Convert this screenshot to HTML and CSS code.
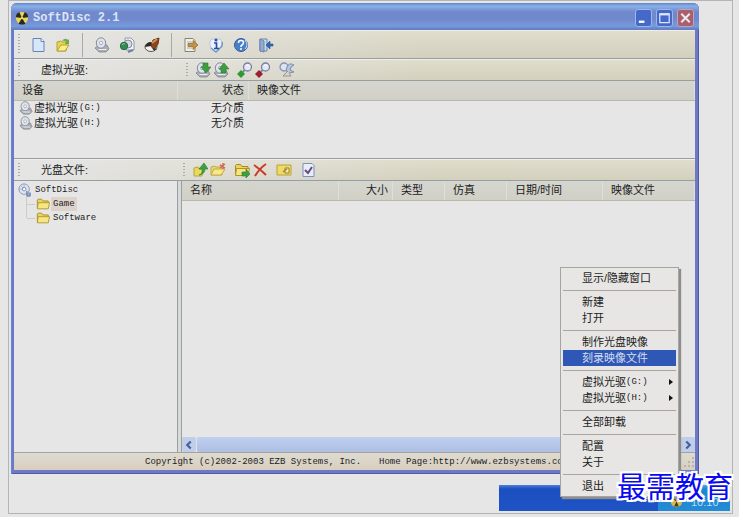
FILE: index.html
```html
<!DOCTYPE html>
<html lang="zh-CN">
<head>
<meta charset="UTF-8">
<title>SoftDisc 2.1</title>
<link rel="stylesheet" href="styles.css">
</head>
<body>
<!-- shared icon shapes -->
<svg class="defs" aria-hidden="true">
<symbol id="disc" viewBox="0 0 16 16">
<path d="M1 11l4-3h8l2 4-3 3H5z" fill="#a9adb4" stroke="#777c86" stroke-width=".7"/>
<ellipse cx="7" cy="6" rx="4.7" ry="5.2" fill="#dfe3ec" stroke="#858b9b"/>
<ellipse cx="7" cy="6" rx="1.5" ry="1.7" fill="#fff" stroke="#969caa" stroke-width=".8"/>
<path d="M3 12h9l1 1H6z" fill="#eceef0"/>
</symbol>
<symbol id="folder" viewBox="0 0 16 16">
<path d="M1.5 12.5v-9l1-1h4l1.5 2h6v3" fill="#ecd456" stroke="#a48b25"/>
<path d="M1.5 13.5l1-7h13l-1.5 7z" fill="#f6e681" stroke="#ae942b"/>
</symbol>
<symbol id="magnet" viewBox="0 0 16 16">
<circle cx="10.500" cy="5" r="4" fill="#e3e8f4" stroke="#7681a5" stroke-width="1.3"/>
<path d="M9 3.500q2-1.500 3.500 1" fill="none" stroke="#fff"/>
<path d="M7.500 8l-2 2.500" stroke="#7681a5" stroke-width="2"/>
</symbol>
</svg>

<main class="frame">
<section class="window">
<header class="titlebar">
<svg class="icon" viewBox="0 0 16 16"><circle cx="8" cy="8" r="7" fill="#e9d657"/><path d="M8 8L1 7q0-4 4-5.500zM8 8l3-6.500q4 1.500 4 5.500zM8 8l4 6.500q-4 2-8 0z" fill="#272923"/><circle cx="8" cy="8" r="1.500" fill="#e9d657"/></svg>
<h1>SoftDisc 2.1</h1>
<button class="win-btn" aria-label="最小化"><svg viewBox="0 0 16 16"><path d="M3 12h6" stroke="#fff" stroke-width="2.500"/></svg></button>
<button class="win-btn" aria-label="最大化"><svg viewBox="0 0 16 16"><path d="M3 4h10v9H3z" fill="none" stroke="#dce6fa" stroke-width="1.300"/><path d="M2.500 4h11" stroke="#dce6fa" stroke-width="2.500"/></svg></button>
<button class="win-btn close" aria-label="关闭"><svg viewBox="0 0 16 16"><path d="M3.500 3.500l9 9M12.500 3.500l-9 9" stroke="#f2e8ea" stroke-width="2.200"/></svg></button>
</header>

<div class="client">
<nav class="toolbar main-bar">
<i class="grip"></i>
<button class="tool" aria-label="新建"><svg class="icon" viewBox="0 0 16 16"><path d="M3 1.500h8l3 3v10H3z" fill="#d8e6fa" stroke="#6882b5"/><path d="M11 1.500v3h3" fill="#fff" stroke="#6882b5"/></svg></button>
<button class="tool" aria-label="打开"><svg class="icon" viewBox="0 0 16 16"><path d="M2 14V5l4-1 1 1h5l-1 9z" fill="#e6d552" stroke="#b4a136"/><path d="M2 14l4-6h8l-4 6z" fill="#f8ef86" stroke="#b4a136"/><path d="M7 4q3-4 6-1l1-1v5h-4l1-2q-1-2-4-1z" fill="#6fab4b"/></svg></button>
<i class="divider"></i>
<button class="tool" aria-label="虚拟光驱"><svg class="icon"><use href="#disc"/></svg></button>
<button class="tool" aria-label="制作光盘映像"><svg class="icon" viewBox="0 0 16 16"><path d="M6 1h6l3 3v9H7z" fill="#f2f4f8" stroke="#8d96ac"/><circle cx="9" cy="7" r="4" fill="#d6dae2" stroke="#858b99"/><circle cx="5" cy="9" r="3.700" fill="#338b52" stroke="#286b44"/><path d="M3 8q1-2 3-1" stroke="#90ce93" fill="none"/><path d="M9 15l5-2" stroke="#72819f" stroke-width="2"/></svg></button>
<button class="tool" aria-label="刻录映像文件"><svg class="icon" viewBox="0 0 16 16"><ellipse cx="7" cy="10" rx="6" ry="4.500" fill="#f3f0e9" stroke="#555"/><path d="M1 10q1-5 7-5l-1 4z" fill="#292927"/><path d="M7 9l2-6 6-2-1 6-4 6z" fill="#8d4524" stroke="#663719"/><path d="M8 6l5-4" stroke="#db9150" stroke-width="2"/><path d="M9 11l4 1-3 2z" fill="#333"/></svg></button>
<i class="divider"></i>
<button class="tool" aria-label="配置"><svg class="icon" viewBox="0 0 16 16"><path d="M2 1.500h8l2 2v11H2z" fill="#f1eee6" stroke="#8a826f"/><path d="M4 5h5M4 11h5" stroke="#9eb0ca"/><path d="M5 6.500h5v-3l5 4.500-5 4.500v-3H5z" fill="#c7943a" stroke="#89652a" stroke-width=".7"/></svg></button>
<button class="tool" aria-label="关于"><svg class="icon" viewBox="0 0 16 16"><path d="M8 15l-5-4q-3-6 1-9h8q4 4 1 9z" fill="#edf1fb" stroke="#b9c4da"/><path d="M14 5q1 4-2 6l-4 4-5-4" fill="none" stroke="#7595c5" stroke-width="1.500"/><circle cx="8" cy="3" r="1.500" fill="#244fa5"/><path d="M6 6h2.500v5M6 11.500h5" stroke="#244fa5" stroke-width="1.700" fill="none"/></svg></button>
<button class="tool" aria-label="帮助"><svg class="icon" viewBox="0 0 16 16"><circle cx="8" cy="8" r="6.500" fill="#477fc8" stroke="#355b9b"/><path d="M12 3q4 5 0 9" stroke="#d6e7f8" fill="none"/><path d="M5.500 6q0-3 3-2.500t1.500 3.500L8 9v1" stroke="#fff" stroke-width="1.600" fill="none"/><circle cx="8" cy="12" r="1" fill="#fff"/></svg></button>
<button class="tool" aria-label="退出"><svg class="icon" viewBox="0 0 16 16"><path d="M2 2h7v12H2z" fill="#c9daee" stroke="#6b83a7"/><path d="M2 2l4 2v11l-4-1z" fill="#91aed2" stroke="#6b83a7"/><path d="M8 8l4-4v3h3v2h-3v3z" fill="#3268b2" stroke="#285391" stroke-width=".6"/></svg></button>
</nav>

<div class="toolbar">
<div class="band drive-band"><i class="grip"></i><span class="caption">虚拟光驱:</span></div>
<i class="grip"></i>
<div class="tools">
<button class="tool small" aria-label="加载"><svg class="icon" viewBox="0 0 16 16"><use href="#disc"/><path d="M8 1h5v4h3l-5 6-5-6h2z" fill="#3e9d3f" stroke="#2b7931" stroke-width=".6"/></svg></button>
<button class="tool small" aria-label="卸载"><svg class="icon" viewBox="0 0 16 16"><use href="#disc"/><path d="M8 11h5V7h3l-5-6-5 6h2z" fill="#3e9d3f" stroke="#2b7931" stroke-width=".6"/></svg></button>
</div>
<div class="tools">
<button class="tool small" aria-label="添加光驱"><svg class="icon" viewBox="0 0 16 16"><use href="#magnet"/><path d="M4 8l4 4-4 4-4-4z" fill="#2d9b34"/></svg></button>
<button class="tool small" aria-label="删除光驱"><svg class="icon" viewBox="0 0 16 16"><use href="#magnet"/><path d="M4 8l4 4-4 4-4-4z" fill="#9c202e"/></svg></button>
</div>
<div class="tools">
<button class="tool small" aria-label="光驱设置"><svg class="icon" viewBox="0 0 16 16"><circle cx="5" cy="5" r="4" fill="#dce2ef" stroke="#8892b1" stroke-width="1.300"/><path d="M15 3q-5-3-7 2t2 6l5-1-4-2 1-3z" fill="#b4c5e0" stroke="#7e8dac"/><path d="M9 9l-5 5h8l-2-3" fill="#ded8cc" stroke="#9b9386"/></svg></button>
</div>
</div>

<div class="devices">
<table>
<colgroup><col class="c-device"><col class="c-state"><col></colgroup>
<thead><tr><th>设备</th><th class="right">状态</th><th>映像文件</th></tr></thead>
<tbody>
<tr><td><svg class="icon"><use href="#disc"/></svg>虚拟光驱<span class="latin">(G:)</span></td><td class="right">无介质</td><td></td></tr>
<tr><td><svg class="icon"><use href="#disc"/></svg>虚拟光驱<span class="latin">(H:)</span></td><td class="right">无介质</td><td></td></tr>
</tbody>
</table>
</div>

<div class="toolbar">
<div class="band file-band"><i class="grip"></i><span class="caption">光盘文件:</span></div>
<i class="grip"></i>
<div class="tools">
<button class="tool small" aria-label="向上"><svg class="icon" viewBox="0 0 16 16"><path d="M2 14V6l4-1 1 2h4l-1 7z" fill="#ead956" stroke="#b8a544"/><path d="M7 13q4-1 3-6H7l5-6 4 6h-3q0 5-6 6z" fill="#3da142" stroke="#287833" stroke-width=".6"/></svg></button>
<button class="tool small" aria-label="新建文件夹"><svg class="icon" viewBox="0 0 16 16"><path d="M1 13V5l4-1 1 1h6v8z" fill="#ead660" stroke="#c2ab50"/><path d="M1 13l3-6h11l-4 6z" fill="#f7e986" stroke="#c2ab50"/><path d="M10 3l5 3M13 1v6M10 6l5-4" stroke="#d16a5b" stroke-width="1.500"/></svg></button>
</div>
<div class="tools">
<button class="tool small" aria-label="添加映像"><svg class="icon" viewBox="0 0 16 16"><use href="#folder"/><path d="M8 10h4V7l4 5-4 4v-2H8z" fill="#3da142" stroke="#287833" stroke-width=".6"/></svg></button>
<button class="tool small" aria-label="删除"><svg class="icon" viewBox="0 0 16 16"><path d="M2 3q6 4 12 10M14 2Q8 6 3 14" stroke="#ca3b27" stroke-width="2" fill="none"/></svg></button>
</div>
<div class="tools">
<button class="tool small" aria-label="重命名"><svg class="icon" viewBox="0 0 16 16"><path d="M1 3h14v10H1z" fill="#eddb65" stroke="#b9a03b"/><path d="M9 6h4v5H9z" fill="#f8efb2" stroke="#94802f"/><path d="M7 10l4-3" stroke="#a78c2c" stroke-width="1.500"/></svg></button>
</div>
<div class="tools">
<button class="tool small" aria-label="属性"><svg class="icon" viewBox="0 0 16 16"><path d="M3 1.500h9l2 2v11H3z" fill="#e8edfc" stroke="#7a8fc4"/><path d="M5 8l3 3 4-6" stroke="#634d75" stroke-width="2" fill="none"/></svg></button>
</div>
</div>

<div class="panes">
<ul class="tree">
<li><svg class="icon" viewBox="0 0 16 16"><circle cx="7" cy="7" r="6" fill="#dbe2f2" stroke="#8993b7"/><path d="M7 1v4M1 7h4M3 3l3 3" stroke="#a5b3d5"/><circle cx="7" cy="7" r="2" fill="#fff" stroke="#7b85aa"/><path d="M10 9v6h4v-4" fill="#93a6cf" stroke="#6577a4"/></svg><span>SoftDisc</span>
<ul>
<li><svg class="icon"><use href="#folder"/></svg><span class="picked">Game</span></li>
<li><svg class="icon"><use href="#folder"/></svg><span>Software</span></li>
</ul>
</li>
</ul>
<div class="files">
<table>
<colgroup><col class="c-name"><col class="c-size"><col class="c-type"><col class="c-emu"><col class="c-date"><col></colgroup>
<thead><tr><th>名称</th><th class="right">大小</th><th>类型</th><th>仿真</th><th>日期/时间</th><th>映像文件</th></tr></thead>
</table>
<div class="scrollbar">
<button aria-label="向左滚动"><svg viewBox="0 0 16 16"><path d="M10 4L6 8l4 4" fill="none" stroke="#46619c" stroke-width="2.500"/></svg></button>
<div class="thumb"></div>
<button aria-label="向右滚动"><svg viewBox="0 0 16 16"><path d="M6 4l4 4-4 4" fill="none" stroke="#46619c" stroke-width="2.500"/></svg></button>
</div>
</div>
</div>

<footer class="status">
<span>Copyright (c)2002-2003 EZB Systems, Inc.</span>
<span class="home">Home Page:http://www.ezbsystems.com</span>
<svg class="sizer" viewBox="0 0 12 12"><path d="M9 1h2v2H9zM5 5h2v2H5zM9 5h2v2H9zM1 9h2v2H1zM5 9h2v2H5zM9 9h2v2H9z" fill="#b9b4a6"/></svg>
</footer>
</div>
</section>

<div class="taskbar">
<div class="tray">
<svg class="icon" viewBox="0 0 16 16"><circle cx="8" cy="8" r="7" fill="#d8b951"/><path d="M8 8L2 4l3-3zM8 8l3-7 4 4zM8 8l3 6H5z" fill="#493d22"/></svg>
<time>10:10</time>
</div>
</div>

<!-- tray menu -->
<div class="menu" role="menu">
<button role="menuitem">显示/隐藏窗口</button>
<hr>
<button role="menuitem">新建</button>
<button role="menuitem">打开</button>
<hr>
<button role="menuitem">制作光盘映像</button>
<button role="menuitem" class="active">刻录映像文件</button>
<hr>
<button role="menuitem" class="sub">虚拟光驱<span class="latin">(G:)</span></button>
<button role="menuitem" class="sub">虚拟光驱<span class="latin">(H:)</span></button>
<hr>
<button role="menuitem">全部卸载</button>
<hr>
<button role="menuitem">配置</button>
<button role="menuitem">关于</button>
<hr>
<button role="menuitem">退出</button>
</div>

<div class="brand">最需教育</div>
</main>
</body>
</html>
```
FILE: styles.css
```css
* { box-sizing:border-box; }
body { margin:0; background:#e6e6e6; color:#1c1c1c; font:11px/15px "Liberation Sans", "Noto Sans CJK SC", sans-serif; }
button { font:inherit; color:inherit; margin:0; padding:0; border:0; background:none; }
ul { list-style:none; margin:0; padding:0; }
.defs { position:absolute; width:0; height:0; }
.icon { display:block; width:16px; height:16px; flex:none; }
.latin { font-family:"Liberation Mono", monospace; font-size:9px; }

.frame { position:relative; display:flex; flex-direction:column; height:calc(100vh - 3px); min-height:480px; margin:0 6px 0 8px; padding:2px 2px 2px 2px; border:1px solid #b4b4b4; }

/* window */
.window { flex:1; min-height:0; display:flex; flex-direction:column; margin:0 31px 11px 0; padding:0 4px 4px 3px; border-radius:6px 6px 0 0; background:#6a7ac6; box-shadow:inset 1px 0 #6384d8, inset -1px -1px #5759a0; }
.titlebar { display:flex; align-items:center; gap:4px; height:27px; margin:0 -4px 0 -3px; padding:2px 5px 0 4px; border-radius:6px 6px 0 0; background:linear-gradient(#5f83c8, #88b0e6 3px, #7088cc 9px, #7088cc 16px, #769bdd 23px, #6278c0); }
.titlebar .icon { width:14px; height:14px; }
.titlebar h1 { flex:1; margin:0; font:bold 12px/16px "Liberation Mono", monospace; color:#dbe5f7; }
.win-btn { width:17px; height:18px; border:1px solid #9db7ec; border-radius:3px; background:#4569c9; }
.win-btn svg { display:block; width:15px; height:16px; }
.close { background:#a8606f; border-color:#c2a1c0; }
.client { flex:1; min-height:0; display:flex; flex-direction:column; background:#e6e6e6; }

/* toolbars */
.toolbar { display:flex; align-items:center; flex:none; height:22px; padding-left:4px; background:linear-gradient(90deg, #e5e5e5, rgba(229,229,229,0) 60%), linear-gradient(#e0ddcc, #d3d0be); border-bottom:1px solid #989e9e; border-top:1px solid #eeeeea; }
.main-bar { height:29px; }
.grip { flex:none; width:2px; height:15px; background:repeating-linear-gradient(#aaa9a2 0 1px, transparent 1px 3px); }
.main-bar .grip { height:21px; margin-right:5px; }
.divider { width:1px; height:24px; margin:0 6px 0 7px; background:#aaa9a1; }
.tool { display:flex; align-items:center; justify-content:center; width:25px; height:22px; }
.small { width:18px; height:20px; }
.tools { display:flex; margin-left:6px; }
.band { display:flex; align-items:center; flex:none; }
.drive-band { width:168px; }
.file-band { width:165px; }
.caption { margin-left:21px; }

/* lists */
table { width:100%; border-collapse:collapse; table-layout:fixed; }
th { height:19px; padding:0 8px; text-align:left; font-weight:normal; white-space:nowrap; background:linear-gradient(#d6d6d0, #d0d0c6); border-bottom:1px solid #b9b8aa; box-shadow:inset -1px 0 #dfdfda; }
td { height:15px; padding:0 5px; line-height:15px; white-space:nowrap; }
td:first-child { display:flex; align-items:center; gap:1px; }
td .icon { width:14px; height:14px; }
th.right, td.right { text-align:right; padding-right:5px; }
.devices { flex:none; height:78px; overflow:hidden; border-bottom:1px solid #989e9e; }
.c-device { width:164px; }
.c-state { width:71px; }
.c-name { width:157px; }
.c-size { width:54px; }
.c-type { width:52px; }
.c-emu { width:62px; }
.c-date { width:96px; }

.panes { flex:1; min-height:0; display:flex; gap:3px; background:#d9d9d5; border-bottom:1px solid #a2a2a0; }
.tree { flex:none; width:164px; padding:2px 0 0 4px; background:#e6e6e6; border-right:1px solid #9a9ea5; font:9px/14px "Liberation Mono", monospace; }
.tree li { position:relative; }
.tree .icon { display:inline-block; width:14px; height:14px; margin-right:3px; vertical-align:top; }
.tree ul { margin-left:8px; border-left:1px solid #cccbc5; height:21px; }
.tree ul li { display:flex; height:14px; padding-left:9px; }
.tree ul li::before { content:""; position:absolute; left:0; top:7px; width:8px; border-top:1px solid #cccbc5; }
.tree ul .icon { margin-right:1px; }
.tree ul span { padding:0 2px; }
.picked { background:#ddd3ca; }
.files { flex:1; min-width:0; display:flex; flex-direction:column; justify-content:space-between; background:#e6e6e6; border-left:1px solid #9a9ea5; }
.scrollbar { display:flex; gap:1px; height:15px; background:#dfe3e8; }
.scrollbar button { width:14px; background:#c0cee9; border-radius:2px; }
.scrollbar svg { display:block; width:14px; height:14px; }
.thumb { flex:1; border-radius:2px; background:linear-gradient(#c0d0f0, #adbee2); }
.status { display:flex; align-items:center; gap:18px; flex:none; height:17px; padding-left:131px; white-space:nowrap; background:linear-gradient(#dedbd0, #d8cec1); font:9px/16px "Liberation Mono", monospace; }
.home { flex:1; }
.sizer { width:12px; height:12px; }

/* desktop */
.taskbar { display:flex; justify-content:flex-end; align-self:flex-end; flex:none; width:231px; height:26px; background:linear-gradient(#4c82d8, #1c4fc0 4px, #1e53c6); }
.tray { display:flex; align-items:flex-end; gap:8px; width:72px; padding:0 0 3px 12px; background:linear-gradient(#4aa5e4, #1d86d2 4px, #248bd6); color:#b7dcf5; line-height:11px; }
.tray .icon { width:13px; height:13px; }
.menu { position:absolute; right:53px; bottom:16px; width:119px; padding:2px; background:#e7e6e4; border:1px solid #a5a5a0; box-shadow:2px 2px 1px #8d8d8d; }
.menu button { display:block; width:100%; height:16px; padding-left:19px; text-align:left; line-height:16px; white-space:nowrap; }
.menu hr { height:1px; margin:4px 0 3px; border:0; background:#aaa59c; }
.menu .active { background:#2f57b5; color:#d5ddf0; }
.menu .sub { display:flex; align-items:center; }
.menu .sub::after { content:""; margin:0 3px 0 auto; border:3px solid transparent; border-left:4px solid #111; border-right:0; }
.brand { position:absolute; right:-1px; bottom:13px; font:29px/30px "Noto Sans CJK SC", sans-serif; color:#0a0af0; white-space:nowrap; text-shadow:2px 0 #fff, -2px 0 #fff, 0 2px #fff, 0 -2px #fff, 2px 2px #fff, -2px 2px #fff, 2px -2px #fff, -2px -2px #fff; }
```
